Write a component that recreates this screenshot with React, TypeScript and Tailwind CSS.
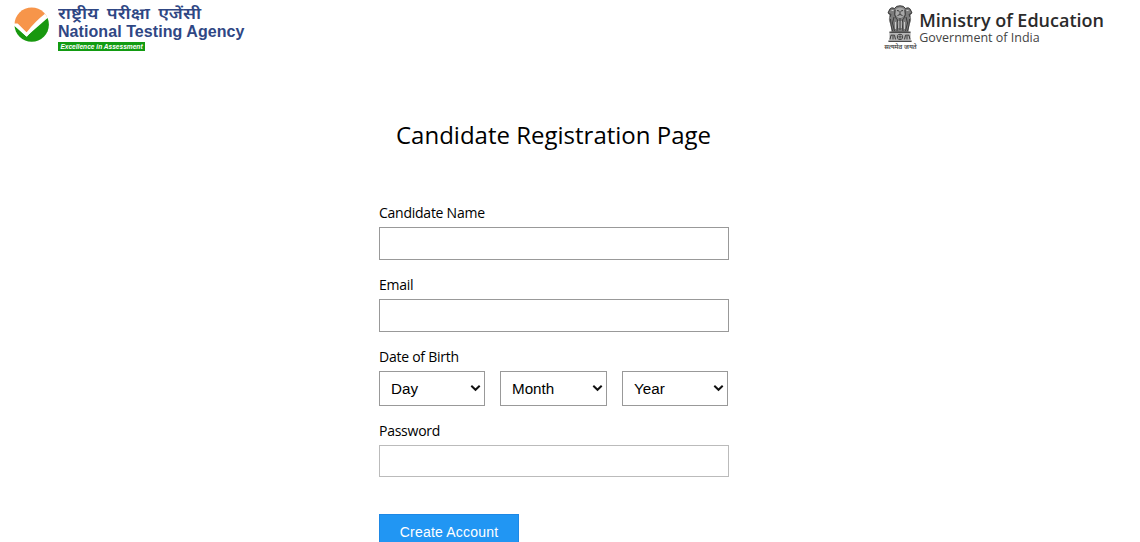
import type { ReactNode } from "react";

function AgencyMark() {
  return (
    <svg className="block h-[36px] w-[36px]" viewBox="0 0 36 36" aria-hidden="true">
      <defs>
        <clipPath id="disc">
          <circle cx="17.7" cy="17.6" r="17.2" />
        </clipPath>
      </defs>
      <g clipPath="url(#disc)">
        <path d="M0 0 H36 V8 L12.4 25.6 L3.6 16.6 L0 16.6 Z" fill="#f7954a" />
        <path d="M0 18 L12.4 29.4 L36 9 V36 H0 Z" fill="#18980f" />
      </g>
      <path d="M0 17 L3.8 17 L12.6 25.4 Q21 14.5 31 6.8 L33.4 10.4 Q21.5 18.8 12.8 29.8 L0 18.6 Z" fill="#fff" />
    </svg>
  );
}

function LionEmblem() {
  return (
    <svg className="block h-[38px] w-[26px]" viewBox="0 0 26 38" aria-hidden="true">
      <path d="M8 3 Q9 .8 13 .8 Q17 .8 18 3 Q22 1.4 23.6 4 L25 7.5 L23.4 11 Q25.2 15 22.6 19 L21.4 27 L4.6 27 L3.4 19 Q.8 15 2.6 11 L1 7.5 L2.4 4 Q4 1.4 8 3 Z" fill="#7c7c7c" />
      <path d="M9 4 Q13 1 17 4 L17.6 9 Q16 13 13 13 Q10 13 8.4 9 Z" fill="#a8a8a8" />
      <g fill="none" stroke="#3a3a3a" strokeWidth="1">
        <path d="M8 3 Q9 .8 13 .8 Q17 .8 18 3 M8 4 Q4 1.5 2.5 5 L1 8 L4 9.5 L3 12 M18 4 Q22 1.5 23.5 5 L25 8 L22 9.5 L23 12" />
        <path d="M10 5.5 L12 6 M14 6 L16 5.5 M13 6 V9 M10.5 10.5 Q13 8.5 15.5 10.5 M8 5 Q6.5 10 9.5 14 M18 5 Q19.5 10 16.5 14" />
        <path d="M10 14 L11 18 L10 26 M16 14 L15 18 L16 26 M13 13 V25 M7 12 L5.5 18 L7.5 26 M19 12 L20.5 18 L18.5 26 M3.5 14 L4 20 L5.5 26 M22.5 14 L22 20 L20.5 26" />
      </g>
      <g stroke="#ddd" strokeWidth=".8">
        <path d="M4.5 5.5 H6.5 M19.5 5.5 H21.5 M8.5 17 V24 M17.5 17 V24 M11.8 16 V23 M14.3 16 V23" />
      </g>
      <path d="M2.4 26.6 H23.6 V28.2 H2.4 Z M1.4 35.4 H24.6 V37 H1.4 Z" fill="#4a4a4a" />
      <path d="M2.4 28.2 H23.6 V35.4 H2.4 Z" fill="#b0b0b0" />
      <circle cx="13" cy="31.9" r="2.7" fill="#ddd" stroke="#444" strokeWidth="1" />
      <path d="M13 29.5 V34.3 M10.6 31.9 H15.4 M3 34.4 L4 30.2 H7.5 L8.5 34.4 M6 31 V34.4 M17.5 34.4 L18.5 30.2 H22 L23 34.4 M20 31 V34.4" stroke="#3a3a3a" strokeWidth="1" fill="none" />
    </svg>
  );
}

function Header() {
  return (
    <header className="flex h-14 items-start justify-between pl-[14px] pr-[36px]">
      <div className="flex gap-[8px]">
        <div className="pt-[7px]">
          <AgencyMark />
        </div>
        <div className="flex flex-col items-start whitespace-nowrap pt-[4px]">
          <div className="h-[18px] origin-left scale-x-[1.195] font-['Noto_Sans_Devanagari','Noto_Sans',sans-serif] text-[15.3px] font-semibold leading-[23px] text-[#2f4784] [word-spacing:3px]">
            राष्ट्रीय परीक्षा एजेंसी
          </div>
          <div className="h-[20px] font-['Liberation_Sans',Arial,sans-serif] text-[16px] font-bold leading-[20px] tracking-[0.07px] text-[#2f4784]">
            National Testing Agency
          </div>
          <div className="h-[9px] w-[87px] bg-[#129b12] text-center font-['Liberation_Sans',Arial,sans-serif] text-[6.6px] font-bold italic leading-[9px] text-white">
            Excellence in Assessment
          </div>
        </div>
      </div>
      <div className="flex">
        <div className="flex w-[35px] flex-col items-start pt-[5px]">
          <div className="pl-[3px]">
            <LionEmblem />
          </div>
          <div className="h-[8px] whitespace-nowrap font-['Noto_Sans_Devanagari','Noto_Sans',sans-serif] text-[6.4px] font-semibold leading-[10px] text-[#444]">
            सत्यमेव जयते
          </div>
        </div>
        <div className="whitespace-nowrap pt-[10px] font-['Open_Sans','Noto_Sans',sans-serif]">
          <div className="text-[18px] font-semibold leading-[20px] text-[#2b2b2b]">Ministry of Education</div>
          <div className="text-[12.5px] leading-[16px] text-[#444]">Government of India</div>
        </div>
      </div>
    </header>
  );
}

function Label({ htmlFor, children }: { htmlFor: string; children: ReactNode }) {
  return (
    <label htmlFor={htmlFor} className="mb-[4px] block h-[20px] text-[14px] leading-[20px] tracking-[-0.25px]">
      {children}
    </label>
  );
}

function Picker({ id, text, width }: { id: string; text: string; width: string }) {
  return (
    <div className={`relative h-[35px] ${width}`}>
      <select
        id={id}
        aria-label={text}
        className="block h-full w-full appearance-none rounded-none border border-[#999] bg-white pl-[11px] pt-px font-['Liberation_Sans',Arial,sans-serif] text-[15.2px] text-black"
      >
        <option>{text}</option>
      </select>
      <svg className="pointer-events-none absolute right-[4px] top-[13px] h-[8px] w-[11px]" viewBox="0 0 11 8" aria-hidden="true">
        <path d="M1.3 1.8 L5.5 5.8 L9.7 1.8" fill="none" stroke="#111" strokeWidth="2" />
      </svg>
    </div>
  );
}

export default function App() {
  return (
    <div className="h-[542px] overflow-hidden bg-white font-['Open_Sans','Noto_Sans',sans-serif] text-black">
      <Header />
      <main className="ml-[379px] w-[350px]">
        <h1 className="pr-px pt-[62px] text-center text-[24px] leading-[34px]">Candidate Registration Page</h1>
        <form className="pt-[51px]">
          <Label htmlFor="name">Candidate Name</Label>
          <input id="name" type="text" className="block h-[33px] w-full border border-[#999] px-2" />
          <div className="pt-[15px]">
            <Label htmlFor="email">Email</Label>
            <input id="email" type="text" className="block h-[33px] w-full border border-[#999] px-2" />
          </div>
          <div className="pt-[15px]">
            <Label htmlFor="day">Date of Birth</Label>
            <div className="flex gap-[15px]">
              <Picker id="day" text="Day" width="w-[106px]" />
              <Picker id="month" text="Month" width="w-[107px]" />
              <Picker id="year" text="Year" width="w-[106px]" />
            </div>
          </div>
          <div className="pt-[15px]">
            <Label htmlFor="password">Password</Label>
            <input id="password" type="password" className="block h-[32px] w-full border border-[#bbb] px-2" />
          </div>
          <button
            type="button"
            className="mt-[37px] block h-[36px] w-[140px] border border-[#1e88e5] bg-[#2196f3] font-['Liberation_Sans',Arial,sans-serif] text-[14px] tracking-[0.2px] text-white"
          >
            Create Account
          </button>
        </form>
      </main>
    </div>
  );
}
